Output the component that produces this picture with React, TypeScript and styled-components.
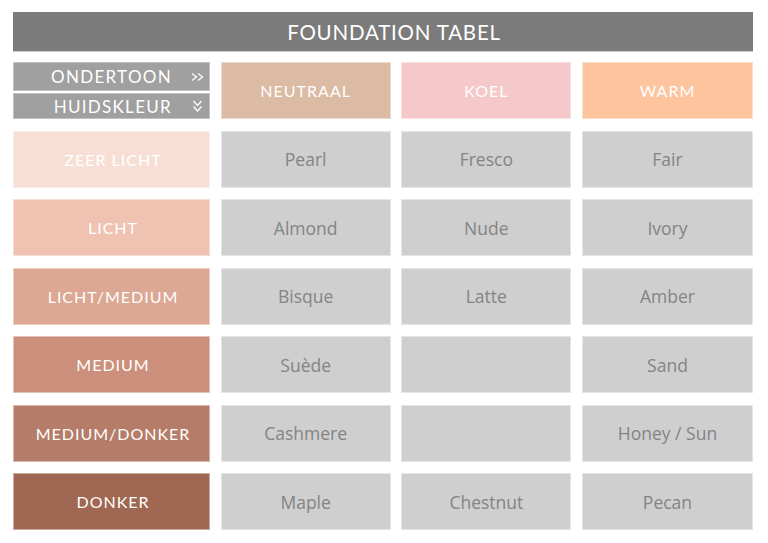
import styled, { createGlobalStyle } from "styled-components";

type Tone = { label: string; color: string };

const undertones: Tone[] = [
  { label: "NEUTRAAL", color: "#dcbba4" },
  { label: "KOEL", color: "#f5c8c9" },
  { label: "WARM", color: "#fdc49e" },
];

// huidskleur + de drie foundations per ondertoon
const rows: { skin: Tone; shades: string[] }[] = [
  { skin: { label: "ZEER LICHT", color: "#f7dfd5" }, shades: ["Pearl", "Fresco", "Fair"] },
  { skin: { label: "LICHT", color: "#efc2b2" }, shades: ["Almond", "Nude", "Ivory"] },
  { skin: { label: "LICHT/MEDIUM", color: "#dca793" }, shades: ["Bisque", "Latte", "Amber"] },
  { skin: { label: "MEDIUM", color: "#cb8f7c" }, shades: ["Suède", "", "Sand"] },
  { skin: { label: "MEDIUM/DONKER", color: "#b57d69" }, shades: ["Cashmere", "", "Honey / Sun"] },
  { skin: { label: "DONKER", color: "#a06752" }, shades: ["Maple", "Chestnut", "Pecan"] },
];

const GlobalStyle = createGlobalStyle`
  html, body {
    margin: 0;
    background: #ffffff;
  }
  body {
    font-family: "Lato", "Open Sans", sans-serif;
  }
`;

export default function App() {
  return (
    <Page>
      <GlobalStyle />
      <Title>FOUNDATION TABEL</Title>
      <Table>
        <LegendStack>
          <LegendCell>
            <span>ONDERTOON</span>
            <svg width="13" height="10" viewBox="0 0 13 10">
              <path d="M1 1.5 L5.5 5 L1 8.5 M7 1.5 L11.5 5 L7 8.5" fill="none" stroke="#fff" strokeWidth="1.3" />
            </svg>
          </LegendCell>
          <LegendCell>
            <span>HUIDSKLEUR</span>
            <svg width="13" height="13" viewBox="0 0 13 13">
              <path d="M2.5 1 L6.5 5.5 L10.5 1 M2.5 6.5 L6.5 11 L10.5 6.5" fill="none" stroke="#fff" strokeWidth="1.3" />
            </svg>
          </LegendCell>
        </LegendStack>
        {undertones.map((t) => (
          <HeadCell key={t.label} $bg={t.color}>
            {t.label}
          </HeadCell>
        ))}
        {rows.map((r) => (
          <Row key={r.skin.label}>
            <HeadCell $bg={r.skin.color} $shift={3}>
              {r.skin.label}
            </HeadCell>
            {r.shades.map((s, i) => (
              <ShadeCell key={i}>{s}</ShadeCell>
            ))}
          </Row>
        ))}
      </Table>
    </Page>
  );
}

const Page = styled.div`
  width: 740px;
  padding: 12px 0 0 13px;
`;

const Title = styled.div`
  height: 40px;
  box-sizing: border-box;
  background: #7b7b7b;
  border-bottom: 1px solid #cfcfcf;
  color: #ffffff;
  font-size: 20.5px;
  letter-spacing: 0.8px;
  padding-left: 22px;
  display: flex;
  align-items: center;
  justify-content: center;
`;

const Table = styled.div`
  margin-top: 10px;
  display: grid;
  grid-template-columns: 197px 170px 170px 171px;
  grid-auto-rows: 57px;
  justify-content: space-between;
  row-gap: 11.5px;
`;

const Row = styled.div`
  display: contents;
`;

const Cell = styled.div`
  box-sizing: border-box;
  border: 1px solid rgba(255, 255, 255, 0.45);
  display: flex;
  align-items: center;
  justify-content: center;
`;

const HeadCell = styled(Cell)<{ $bg: string; $shift?: number }>`
  background: ${(p) => p.$bg};
  color: #ffffff;
  font-size: 16px;
  letter-spacing: 1px;
  padding-left: ${(p) => p.$shift ?? 0}px;
`;

const ShadeCell = styled(Cell)`
  background: #cfcfcf;
  color: #848484;
  font-family: "Open Sans", "Lato", sans-serif;
  font-size: 17.5px;
`;

const LegendStack = styled.div`
  display: grid;
  grid-template-rows: 29px 26px;
  row-gap: 2px;
`;

const LegendCell = styled.div`
  background: #a0a0a0;
  color: #ffffff;
  font-size: 17px;
  letter-spacing: 1.3px;
  display: flex;
  align-items: center;
  justify-content: flex-end;
  gap: 19px;
  padding-right: 5px;
  border: 1px solid rgba(255, 255, 255, 0.35);
`;
